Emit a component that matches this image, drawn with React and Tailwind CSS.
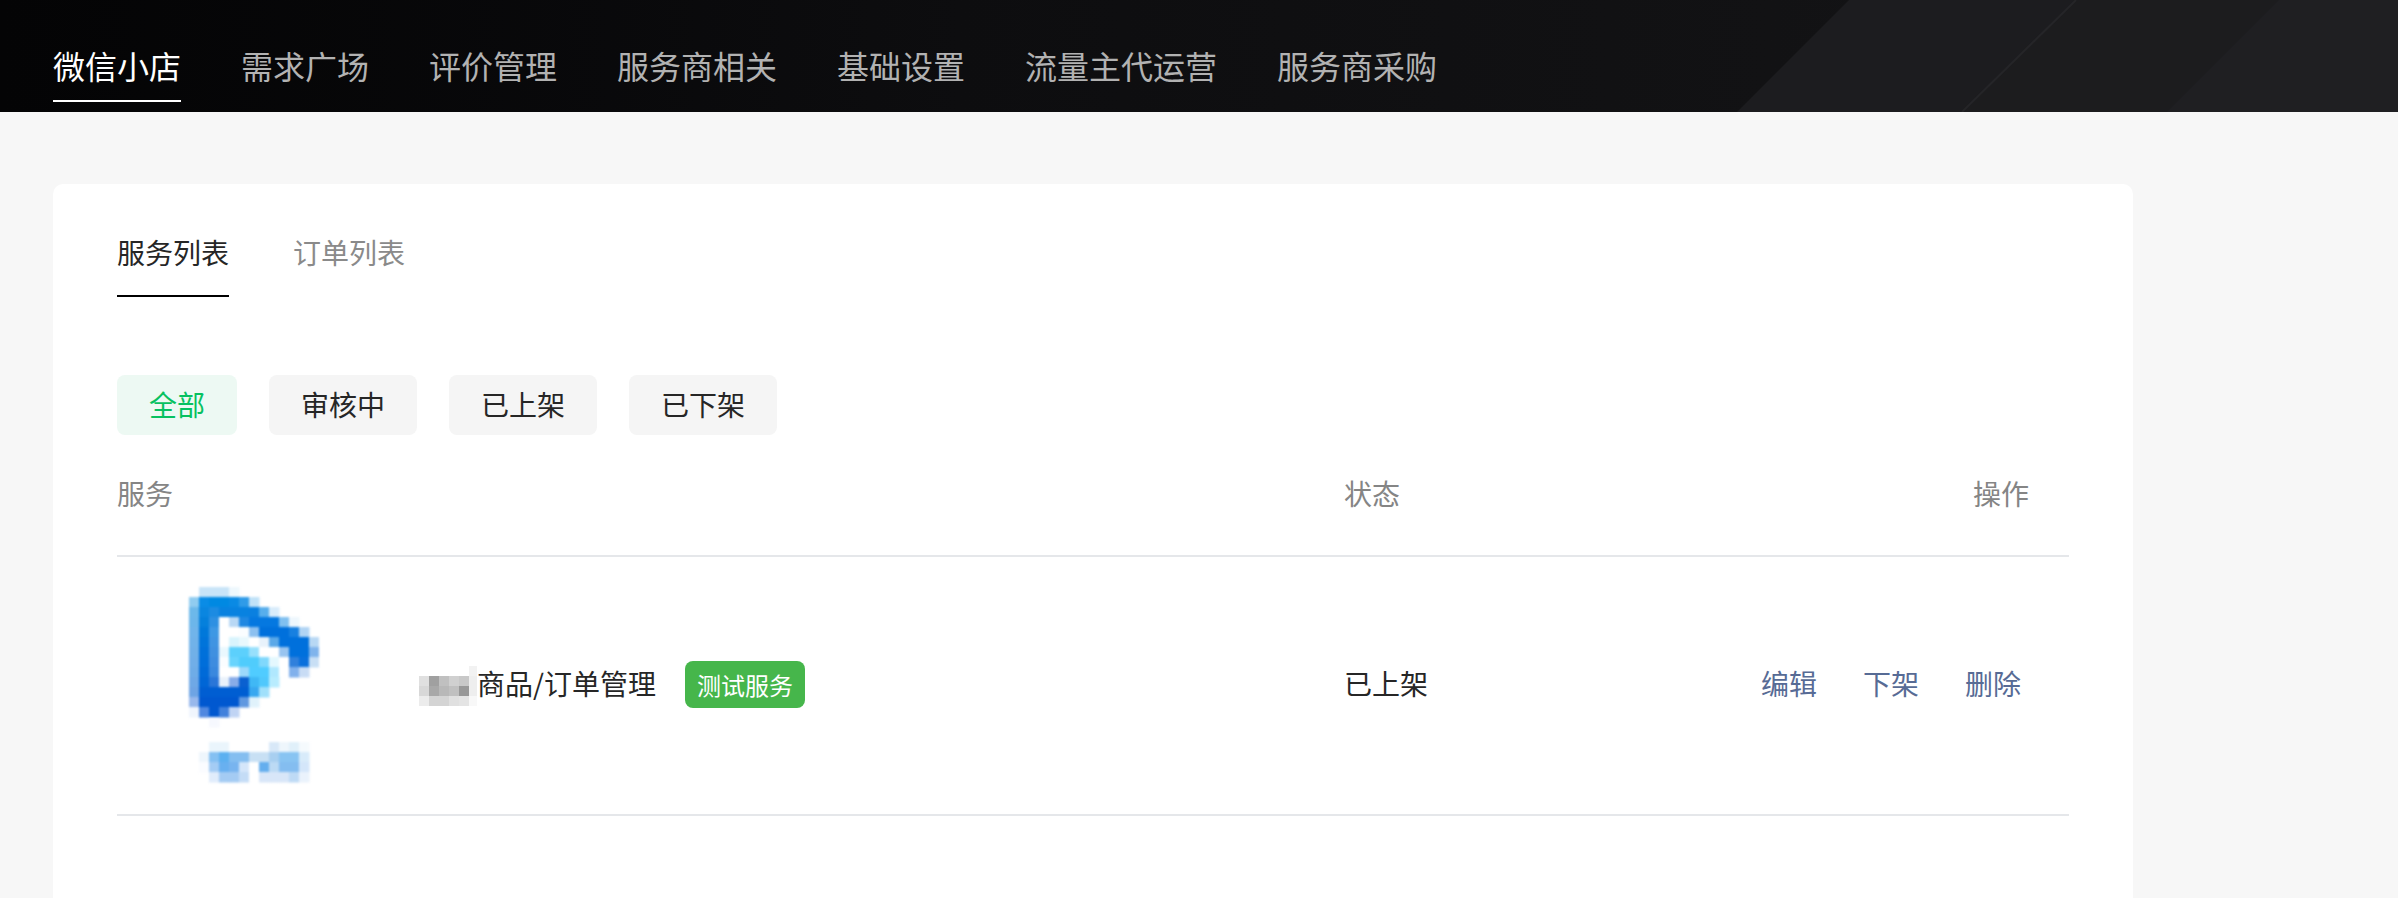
const NAV = ["微信小店", "需求广场", "评价管理", "服务商相关", "基础设置", "流量主代运营", "服务商采购"];
const FILTERS = ["全部", "审核中", "已上架", "已下架"];

// cell colours of the pixelated logo: [row, startCol, colours...]
const LOGO = [
  [0, 1, "#c8e4f8", "#c8e4f8", "#c8e4f8", "#eef8fd"],
  [1, 0, "#90ccf0", "#0a8ce6", "#0089e2", "#0089e2", "#0a8ae4", "#2f9be8", "#c0e2f8"],
  [2, 0, "#6cb8ea", "#0a86e0", "#1c8be2", "#0882e0", "#0882e0", "#0882e0", "#0a80e0", "#57aeec", "#d8ecfb"],
  [3, 0, "#6cb6ea", "#0580dc", "#2e90e2", "#ffffff", "#b8d8f5", "#2088e2", "#0578e0", "#0578e0", "#0578e0", "#80c0f0", "#eef7fd"],
  [4, 0, "#70b4ea", "#0078da", "#3e98e4", "#ffffff", "#ffffff", "#fafdff", "#8cc0f0", "#0070dc", "#0070dc", "#0070dc", "#1880e0", "#b0d4f4"],
  [5, 0, "#70b2e9", "#0074da", "#4094e2", "#ffffff", "#d8f4fd", "#e8f8fd", "#ffffff", "#e8f2fb", "#5aa8e8", "#0070dc", "#0070dc", "#0070dc", "#b8d8f4"],
  [6, 0, "#70b0e8", "#0070da", "#4090e0", "#eaf8fe", "#5cd0fc", "#5cd0fc", "#98e0fc", "#ffffff", "#ffffff", "#98c4f0", "#0070dc", "#0070dc", "#80b4ec"],
  [7, 0, "#70aee8", "#006eda", "#3e8cdf", "#fafdff", "#68d4fd", "#50ccfc", "#50ccfc", "#80d8fc", "#e4f8fe", "#ffffff", "#3080dc", "#0a70dc", "#c8dff5"],
  [8, 0, "#6eace7", "#006ad8", "#3a88de", "#ffffff", "#ffffff", "#9cd8fb", "#50ccff", "#50ccff", "#b0e8fe", "#ffffff", "#80b0ec", "#c8dcf5"],
  [9, 0, "#6ea8e6", "#0066d6", "#2a76d8", "#eaf2fb", "#88ace8", "#0a60d0", "#40b8f5", "#50c8fc", "#b8ecfe"],
  [10, 0, "#6ea4e4", "#005ed2", "#005ed2", "#005ed2", "#005ed2", "#005ed2", "#38a8f0", "#a0e0fb"],
  [11, 0, "#98b8ec", "#0058d0", "#0058d0", "#0058d0", "#0058d0", "#6098e0", "#e0f2fb"],
  [12, 0, "#f0f5fd", "#5088e0", "#0058d0", "#4080dc", "#c0d4f4"],
  [13, 2, "#f6f8fe"],
  [15.5, 2, "#eaf5fc", "#eaf5fc", "#ffffff", "#ffffff", "#ffffff", "#ffffff", "#d8e8f8", "#eef6fc", "#e0f0fa", "#f5fafd"],
  [16.5, 1, "#eef6fc", "#84c0f2", "#5cb0f0", "#84bef0", "#84bef0", "#c8e0f4", "#c8e0f4", "#a8cff0", "#88c4f2", "#88c4f2", "#d8ebfa"],
  [17.5, 1, "#fafcff", "#a4ccf4", "#68b0f0", "#78b4ef", "#d4e6fa", "#ffffff", "#64aeee", "#bcdaf4", "#84bdf0", "#84bdf0", "#d4e6fa"],
  [18.5, 2, "#e0ecfb", "#a4cbf3", "#a4cbf3", "#c4dcf6", "#ffffff", "#d8e6f8", "#d8e6f8", "#d8e6f8", "#bedaf5", "#eaf2fc"],
];

const NAME_MOSAIC = [
  [5, ["#ffffff", "#ffffff", "#ffffff", "#ffffff", "#ffffff", "#f2f2f2"]],
  [15, ["#e0e0e0", "#a0a0a0", "#c0c0c0", "#d0d0d0", "#c8c8c8", "#eeeeee"]],
  [25, ["#d8d8d8", "#a8a8a8", "#b8b8b8", "#c0c0c0", "#989898", "#eeeeee"]],
  [35, ["#ececec", "#d4d4d4", "#d4d4d4", "#e0e0e0", "#e4e4e4", "#f8f8f8"]],
];

function Logo() {
  return (
    <svg width="130" height="197" viewBox="0 0 130 197" className="shrink-0 blur-[1px]" aria-hidden="true">
      {LOGO.map(([row, start, ...cells]) =>
        cells.map((fill, i) => (
          <rect key={`${row}-${i}`} x={(start + i) * 10} y={row * 10} width="10.5" height="10.5" fill={fill} />
        ))
      )}
    </svg>
  );
}

function NameMosaic() {
  return (
    <svg width="58" height="40" viewBox="0 5 58 40" className="shrink-0 blur-[0.6px]" aria-hidden="true">
      {NAME_MOSAIC.map(([y, cells]) =>
        cells.map((fill, i) => <rect key={`${y}-${i}`} x={i * 10} y={y} width="10.5" height="10.5" fill={fill} />)
      )}
    </svg>
  );
}

export default function App() {
  return (
    <div className="flex h-[898px] flex-col overflow-hidden bg-[#f7f7f7] font-['Noto_Sans_CJK_SC','Noto_Sans',sans-serif] text-[28px] leading-[40px] text-[#262626]">
      <header className="relative h-[112px] shrink-0 overflow-hidden bg-gradient-to-r from-[#040405] via-[#0d0d0f] via-40% to-[#161618]">
        <svg className="absolute inset-0 h-[112px] w-full" viewBox="0 0 2398 112" preserveAspectRatio="none" aria-hidden="true">
          <polygon points="1849,0 2398,0 2398,112 1737,112" fill="#1c1c1f" />
          <polygon points="2076,0 2279,0 2167,112 1962,112" fill="#1c1c1e" />
          <line x1="2076" y1="0" x2="1962" y2="112" stroke="#252528" strokeWidth="2" />
          <polygon points="2279,0 2398,0 2398,112 2167,112" fill="#1f1f22" />
        </svg>
        <nav className="relative flex gap-[60px] pl-[53px] pt-[41px]">
          {NAV.map((item, i) => (
            <div
              key={item}
              className={
                i === 0
                  ? "border-b-2 border-white pb-[11px] text-[32px] leading-[48px] text-white"
                  : "border-b-2 border-transparent pb-[11px] text-[32px] leading-[48px] text-[#b2b2b2]"
              }
            >
              {item}
            </div>
          ))}
        </nav>
      </header>

      <main className="flex flex-1 flex-col pl-[53px] pt-[72px]">
        <section className="w-[2080px] flex-1 rounded-t-[10px] bg-white px-[64px] pt-[48px]">
          <div className="flex gap-[64px]">
            <div className="border-b-2 border-black pb-[23px]">服务列表</div>
            <div className="pb-[23px] text-[#8a8a8a]">订单列表</div>
          </div>

          <div className="mt-[78px] flex gap-[32px]">
            {FILTERS.map((item, i) => (
              <div
                key={item}
                className={
                  i === 0
                    ? "flex h-[60px] items-center rounded-lg bg-[#edf9f3] px-[32px] pb-[2px] text-[#07c160]"
                    : "flex h-[60px] items-center rounded-lg bg-[#f5f5f5] px-[32px] pb-[2px]"
                }
              >
                {item}
              </div>
            ))}
          </div>

          <div className="w-[1952px]">
            <div className="grid h-[122px] grid-cols-[1227px_1fr_auto] items-center border-b-2 border-[#e5e7ea] pb-[4px] pr-[40px] text-[#858585]">
              <div>服务</div>
              <div>状态</div>
              <div>操作</div>
            </div>
            <div className="grid h-[259px] grid-cols-[1227px_1fr_auto] items-center border-b-2 border-[#e5e7ea] pr-[48px]">
              <div className="flex items-center pl-[72px]">
                <Logo />
                <div className="ml-[100px] flex items-center">
                  <NameMosaic />
                  <span className="pb-[5px]">商品/订单管理</span>
                  <span className="mb-[2px] ml-[29px] rounded-lg bg-[#46b64b] px-[12px] text-[24px] leading-[47px] text-white">测试服务</span>
                </div>
              </div>
              <div className="pb-[5px]">已上架</div>
              <div className="flex gap-[46px] pb-[5px] text-[#576b95]">
                <span>编辑</span>
                <span>下架</span>
                <span>删除</span>
              </div>
            </div>
          </div>
        </section>
      </main>
    </div>
  );
}
